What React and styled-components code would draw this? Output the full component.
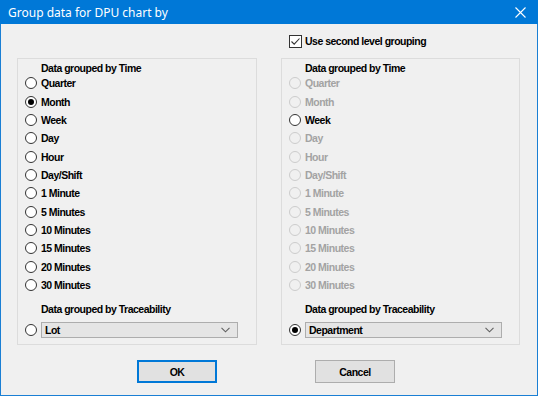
import React from "react";
import styled, { createGlobalStyle } from "styled-components";

const GlobalStyle = createGlobalStyle`
  html, body {
    margin: 0;
    padding: 0;
    background: #ffffff;
  }
`;

const timeOptions = [
  "Quarter",
  "Month",
  "Week",
  "Day",
  "Hour",
  "Day/Shift",
  "1 Minute",
  "5 Minutes",
  "10 Minutes",
  "15 Minutes",
  "20 Minutes",
  "30 Minutes",
];

const Radio = ({ checked, disabled }) => (
  <RadioCircle $disabled={disabled}>{checked && <RadioDot />}</RadioCircle>
);

const CloseIcon = () => (
  <svg width="11" height="11" viewBox="0 0 11 11">
    <path d="M0.5 0.5 L10.5 10.5 M10.5 0.5 L0.5 10.5" stroke="#fff" strokeWidth="1.1" />
  </svg>
);

const Chevron = () => (
  <svg width="9" height="6" viewBox="0 0 9 6">
    <path d="M0.5 0.8 L4.5 4.8 L8.5 0.8" stroke="#606060" strokeWidth="1.1" fill="none" />
  </svg>
);

const GroupBox = ({ selected, enabled, traceSelected, traceValue, allEnabled }) => (
  <Group>
    <GroupTitle>Data grouped by Time</GroupTitle>
    <OptionList>
      {timeOptions.map((opt) => {
        const on = allEnabled || enabled.includes(opt);
        return (
          <Option key={opt} $disabled={!on}>
            <Radio checked={selected === opt} disabled={!on} />
            <span>{opt}</span>
          </Option>
        );
      })}
    </OptionList>
    <TraceTitle>Data grouped by Traceability</TraceTitle>
    <TraceRow>
      <Radio checked={traceSelected} />
      <Combo>
        <span>{traceValue}</span>
        <Chevron />
      </Combo>
    </TraceRow>
  </Group>
);

const App = () => {
  return (
    <>
      <GlobalStyle />
      <Window>
        <TitleBar>
          <Title>Group data for DPU chart by</Title>
          <CloseButton>
            <CloseIcon />
          </CloseButton>
        </TitleBar>
        <Body>
          <Columns>
            <div />
            <CheckRow>
              <CheckBox>
                <svg width="11" height="11" viewBox="0 0 11 11">
                  <path d="M1.5 5.5 L4.2 8.2 L9.5 2.5" stroke="#333" strokeWidth="1.1" fill="none" />
                </svg>
              </CheckBox>
              <span>Use second level grouping</span>
            </CheckRow>
            <GroupBox selected="Month" allEnabled traceValue="Lot" />
            <GroupBox enabled={["Week"]} traceSelected traceValue="Department" />
          </Columns>
          <ButtonRow>
            <Button $default>OK</Button>
            <Button>Cancel</Button>
          </ButtonRow>
        </Body>
      </Window>
    </>
  );
};

const Window = styled.div`
  width: 538px;
  height: 396px;
  box-sizing: border-box;
  border: 1px solid #1a7fd4;
  border-top: none;
  background: #f0f0f0;
  display: flex;
  flex-direction: column;
  font-family: "Liberation Sans", Arial, sans-serif;
  font-size: 10.5px;
  font-weight: bold;
  letter-spacing: -0.5px;
  color: #000;
`;

const TitleBar = styled.div`
  height: 24px;
  margin: 0 -1px;
  background: #0078d7;
  display: flex;
  align-items: center;
  justify-content: space-between;
  flex-shrink: 0;
`;

const Title = styled.div`
  padding-left: 8px;
  color: #ffffff;
  font-family: "Noto Sans", "Open Sans", sans-serif;
  font-size: 12px;
  font-weight: normal;
  letter-spacing: 0;
`;

const CloseButton = styled.div`
  width: 46px;
  height: 24px;
  display: flex;
  align-items: center;
  justify-content: center;
  margin-right: -5px;
`;

const Body = styled.div`
  padding: 11px 0 0 16px;
  display: flex;
  flex-direction: column;
`;

const Columns = styled.div`
  display: grid;
  grid-template-columns: 240px 239px;
  grid-template-rows: 23px 287px;
  column-gap: 24px;
`;

const CheckRow = styled.div`
  display: flex;
  align-items: flex-start;
  gap: 3px;
  padding-left: 8px;
  line-height: 13px;
`;

const CheckBox = styled.div`
  width: 11px;
  height: 11px;
  border: 1px solid #333;
  background: #fff;
  display: flex;
  flex-shrink: 0;
`;

const Group = styled.div`
  border: 1px solid #dcdcdc;
  box-sizing: border-box;
  padding: 2px 0 0 7px;
  display: flex;
  flex-direction: column;
`;

const GroupTitle = styled.div`
  padding-left: 16px;
  line-height: 14px;
`;

const OptionList = styled.div`
  display: flex;
  flex-direction: column;
  margin-top: -1px;
`;

const Option = styled.div`
  display: flex;
  align-items: center;
  gap: 4px;
  height: 18.36px;
  color: ${(p) => (p.$disabled ? "#a3a3a3" : "#000")};
`;

const RadioCircle = styled.div`
  width: 10px;
  height: 10px;
  border-radius: 50%;
  border: 1px solid ${(p) => (p.$disabled ? "#cccccc" : "#333333")};
  background: ${(p) => (p.$disabled ? "#f0f0f0" : "#ffffff")};
  display: flex;
  align-items: center;
  justify-content: center;
  flex-shrink: 0;
`;

const RadioDot = styled.div`
  width: 6px;
  height: 6px;
  border-radius: 50%;
  background: #000;
`;

const TraceTitle = styled.div`
  margin-top: 8px;
  padding-left: 16px;
  line-height: 14px;
`;

const TraceRow = styled.div`
  display: flex;
  align-items: center;
  gap: 4px;
  margin-top: 6px;
`;

const Combo = styled.div`
  width: 197px;
  height: 16px;
  box-sizing: border-box;
  border: 1px solid #adadad;
  background: #e5e5e5;
  display: flex;
  align-items: center;
  justify-content: space-between;
  padding: 0 7px 0 3px;
`;

const ButtonRow = styled.div`
  display: flex;
  gap: 98px;
  padding: 15px 0 0 120px;
`;

const Button = styled.div`
  width: 80px;
  height: 23px;
  box-sizing: border-box;
  border: ${(p) => (p.$default ? "2px solid #0078d7" : "1px solid #adadad")};
  background: #e1e1e1;
  display: flex;
  align-items: center;
  justify-content: center;
`;

export default App;
